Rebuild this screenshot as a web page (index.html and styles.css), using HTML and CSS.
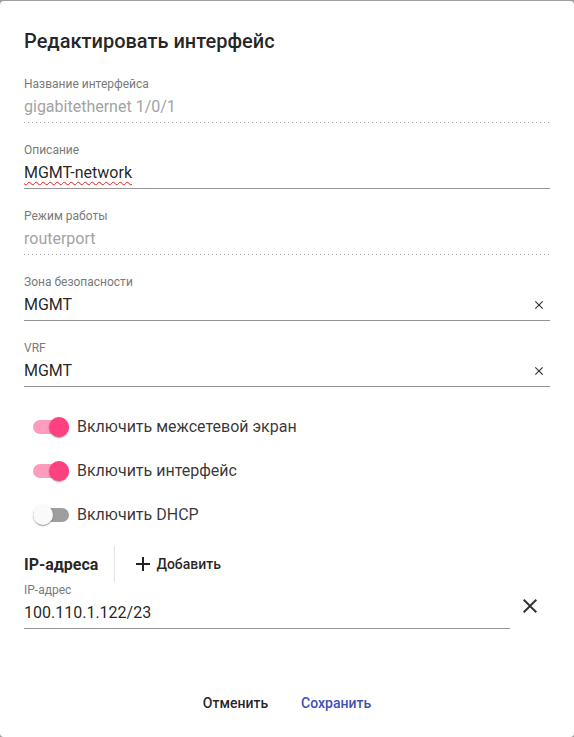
FILE: index.html
```html
<!DOCTYPE html>
<html lang="ru">
<head>
<meta charset="utf-8">
<title>Редактировать интерфейс</title>
<link rel="stylesheet" href="styles.css">
</head>
<body>
<div class="dialog">
  <h2 class="title">Редактировать интерфейс</h2>

  <div class="field">
    <div class="label">Название интерфейса</div>
    <div class="value disabled">gigabitethernet 1/0/1</div>
  </div>

  <div class="field">
    <div class="label">Описание</div>
    <div class="value"><span class="spell">MGMT-network</span></div>
  </div>

  <div class="field">
    <div class="label">Режим работы</div>
    <div class="value disabled">routerport</div>
  </div>

  <div class="field">
    <div class="label">Зона безопасности</div>
    <div class="value"><span>MGMT</span>
      <svg class="clear" viewBox="0 0 24 24"><path d="M19 6.41L17.59 5 12 10.59 6.41 5 5 6.41 10.59 12 5 17.59 6.41 19 12 13.41 17.59 19 19 17.59 13.41 12z"/></svg>
    </div>
  </div>

  <div class="field">
    <div class="label">VRF</div>
    <div class="value"><span>MGMT</span>
      <svg class="clear" viewBox="0 0 24 24"><path d="M19 6.41L17.59 5 12 10.59 6.41 5 5 6.41 10.59 12 5 17.59 6.41 19 12 13.41 17.59 19 19 17.59 13.41 12z"/></svg>
    </div>
  </div>

  <div class="toggles">
    <div class="toggle on"><span class="switch"><span class="track"></span><span class="thumb"></span></span><span class="tlabel">Включить межсетевой экран</span></div>
    <div class="toggle on"><span class="switch"><span class="track"></span><span class="thumb"></span></span><span class="tlabel">Включить интерфейс</span></div>
    <div class="toggle"><span class="switch"><span class="track"></span><span class="thumb"></span></span><span class="tlabel">Включить DHCP</span></div>
  </div>

  <div class="ip-header">
    <span class="ip-title">IP-адреса</span>
    <span class="divider"></span>
    <button class="add-btn" type="button">
      <svg class="add-icon" viewBox="0 0 24 24"><path d="M19 13h-6v6h-2v-6H5v-2h6V5h2v6h6v2z"/></svg>
      <span>Добавить</span>
    </button>
  </div>

  <div class="ip-row">
    <div class="field ip-field">
      <div class="label">IP-адрес</div>
      <div class="value ip-value">100.110.1.122/23</div>
    </div>
    <button class="icon-btn" type="button">
      <svg viewBox="0 0 24 24"><path d="M19 6.41L17.59 5 12 10.59 6.41 5 5 6.41 10.59 12 5 17.59 6.41 19 12 13.41 17.59 19 19 17.59 13.41 12z"/></svg>
    </button>
  </div>

  <div class="actions">
    <button class="btn" type="button">Отменить</button>
    <button class="btn primary" type="button">Сохранить</button>
  </div>
</div>
</body>
</html>
```

FILE: styles.css
```css
html, body {
  margin: 0;
  padding: 0;
}
body {
  background: #9e9e9e;
  padding-top: 1px;
  font-family: Roboto, "Noto Sans", sans-serif;
  color: rgba(0, 0, 0, 0.87);
}
.dialog {
  background: #fff;
  border-radius: 4px;
  height: 736px;
  box-sizing: border-box;
  padding: 24px 24px 0;
  display: flex;
  flex-direction: column;
}
.title {
  margin: 0 0 19px;
  font-size: 20px;
  font-weight: 500;
  line-height: 32px;
  color: rgba(0, 0, 0, 0.87);
}
.field {
  margin-bottom: 19px;
}
.label {
  font-size: 12px;
  line-height: 16px;
  color: #7a7a7a;
}
.value {
  display: flex;
  align-items: center;
  justify-content: space-between;
  margin-top: 3px;
  height: 24px;
  padding-bottom: 3px;
  font-size: 16px;
  line-height: 24px;
  color: rgba(0, 0, 0, 0.87);
  border-bottom: 1px solid #949494;
}
.value.disabled {
  border-bottom: none;
  padding-bottom: 4px;
  color: #a3a3a3;
  background-image: linear-gradient(to right, #a8a8a8 0, #a8a8a8 1px, transparent 1px);
  background-size: 4px 1px;
  background-repeat: repeat-x;
  background-position: left bottom;
}
.spell {
  text-decoration: underline wavy #e21b1b;
  text-decoration-thickness: 1px;
  text-underline-offset: 3px;
}
.clear {
  width: 14px;
  height: 14px;
  margin-right: 4px;
  fill: #333;
}
.toggles {
  margin-top: 9px;
  padding-left: 9px;
  display: flex;
  flex-direction: column;
  gap: 20px;
}
.toggle {
  display: flex;
  align-items: center;
  height: 24px;
}
.switch {
  position: relative;
  width: 36px;
  height: 24px;
  display: flex;
  align-items: center;
  flex: none;
}
.track {
  width: 36px;
  height: 14px;
  border-radius: 8px;
  background: #9e9e9e;
}
.thumb {
  position: absolute;
  left: 0;
  top: 2px;
  width: 20px;
  height: 20px;
  border-radius: 50%;
  background: #fafafa;
  box-shadow: 0 2px 1px -1px rgba(0,0,0,.2), 0 1px 1px 0 rgba(0,0,0,.14), 0 1px 3px 0 rgba(0,0,0,.12);
}
.toggle.on .track {
  background: #ff9bbd;
}
.toggle.on .thumb {
  left: 16px;
  background: #ff4081;
}
.tlabel {
  margin-left: 8px;
  font-size: 16px;
  line-height: 24px;
  color: rgba(0, 0, 0, 0.8);
}
.ip-header {
  margin-top: 19px;
  height: 36px;
  display: flex;
  align-items: center;
}
.ip-title {
  font-size: 16px;
  font-weight: 700;
  color: rgba(0, 0, 0, 0.87);
  padding-right: 16px;
}
.divider {
  align-self: stretch;
  width: 0;
  border-left: 1px solid #e3e3e3;
}
.add-btn {
  margin-left: 16px;
  display: flex;
  align-items: center;
  border: none;
  background: none;
  padding: 0;
  font-family: inherit;
  font-size: 14px;
  font-weight: 500;
  color: rgba(0, 0, 0, 0.87);
  gap: 1px;
}
.add-icon {
  width: 24px;
  height: 24px;
  fill: #222;
}
.ip-row {
  display: flex;
  align-items: center;
}
.ip-field {
  flex: 1;
  margin-bottom: 0;
}
.icon-btn {
  width: 40px;
  height: 40px;
  border: none;
  background: none;
  padding: 0;
  display: flex;
  align-items: center;
  justify-content: center;
}
.icon-btn svg {
  width: 24px;
  height: 24px;
  fill: #333;
}
.actions {
  margin-top: auto;
  padding-bottom: 16px;
  display: flex;
  justify-content: center;
  gap: 1px;
}
.btn {
  border: none;
  background: none;
  padding: 0 16px;
  height: 36px;
  line-height: 36px;
  font-family: inherit;
  font-size: 14px;
  font-weight: 500;
  color: rgba(0, 0, 0, 0.87);
}
.btn.primary {
  color: #3f51b5;
}
```
